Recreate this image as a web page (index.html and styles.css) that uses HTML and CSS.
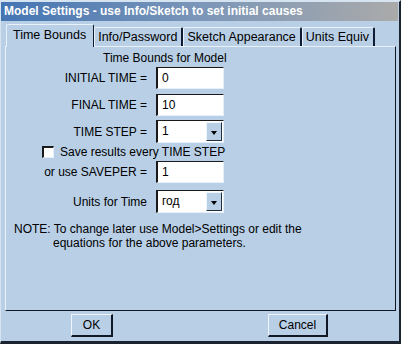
FILE: index.html
```html
<!DOCTYPE html>
<html>
<head>
<meta charset="utf-8">
<link rel="stylesheet" href="styles.css">
</head>
<body>
<div class="window">
  <div class="titlebar">Model Settings - use Info/Sketch to set initial causes</div>
  <div class="tabs">
    <div class="tab selected">Time Bounds</div>
    <div class="tab">Info/Password</div>
    <div class="tab">Sketch Appearance</div>
    <div class="tab">Units Equiv</div>
  </div>
  <div class="panel">
    <div class="heading">Time Bounds for Model</div>
    <div class="row r1"><span class="label">INITIAL TIME =</span><div class="input">0</div></div>
    <div class="row r2"><span class="label">FINAL TIME =</span><div class="input">10</div></div>
    <div class="row r3"><span class="label">TIME STEP =</span><div class="combo"><span class="value">1</span><span class="arrow"></span></div></div>
    <div class="check-row"><span class="checkbox"></span><span>Save results every TIME STEP</span></div>
    <div class="row r5"><span class="label">or use SAVEPER =</span><div class="input">1</div></div>
    <div class="row r6"><span class="label">Units for Time</span><div class="combo"><span class="value">год</span><span class="arrow"></span></div></div>
    <div class="note">
      <div>NOTE: To change later use Model&gt;Settings or edit the</div>
      <div class="indent">equations for the above parameters.</div>
    </div>
  </div>
  <div class="buttons">
    <button class="btn ok">OK</button>
    <button class="btn cancel">Cancel</button>
  </div>
</div>
</body>
</html>
```
FILE: styles.css
```css
html, body {
  margin: 0;
  padding: 0;
  background: #b8cfe6;
}
body {
  font-family: "Liberation Sans", Arial, sans-serif;
  font-size: 12px;
  color: #000;
}
.window {
  width: 401px;
  height: 344px;
  box-sizing: border-box;
  background: #b8cfe6;
  border-top: 2px solid #d6e4f2;
  border-left: 1px solid #d6e4f2;
  border-right: 2px solid #1b2230;
  border-bottom: 3px solid #1b2230;
  display: flex;
  flex-direction: column;
}
.titlebar {
  height: 19px;
  margin-right: 1px;
  line-height: 19px;
  padding-left: 3px;
  font-weight: bold;
  font-size: 12px;
  color: #fff;
  background: linear-gradient(to right, #4475b3 0%, #7b96b8 50%, #aaaaaa 100%);
  white-space: nowrap;
}
.tabs {
  display: flex;
  align-items: flex-end;
  height: 22px;
  margin-top: 3px;
  padding-left: 5px;
  position: relative;
  z-index: 1;
}
.tab {
  height: 19px;
  line-height: 19px;
  font-size: 12.5px;
  padding: 0 4px 0 3px;
  box-sizing: border-box;
  border-top: 1px solid #e8f1fa;
  border-left: 1px solid #e8f1fa;
  border-right: 2px solid #0f1a33;
  border-radius: 2px 2px 0 0;
  white-space: nowrap;
}
.tab.selected {
  height: 23px;
  line-height: 21px;
  padding: 0 7px 0 6px;
  margin-bottom: -1px;
  background: #b8cfe6;
  border-right: 1px solid #0f1a33;
}
.panel {
  flex: 1;
  margin: 0 3px 0 4px;
  border-top: 1px solid #e8f1fa;
  border-left: 1px solid #e8f1fa;
  border-right: 1px solid #101828;
  border-bottom: 1px solid #101828;
  display: flex;
  flex-direction: column;
}
.heading {
  padding-top: 3px;
  padding-left: 97px;
  line-height: 16px;
}
.row {
  display: flex;
  align-items: center;
  gap: 9px;
}
.label {
  width: 141px;
  text-align: right;
  white-space: nowrap;
}
.r1 { margin-top: 1px; }
.r2 { margin-top: 5px; }
.r3 { margin-top: 4px; }
.r5 { margin-top: 0; }
.r6 { margin-top: 7px; }
.input {
  width: 68px;
  height: 22px;
  box-sizing: border-box;
  background: #fff;
  border-top: 1px solid #1a1a1a;
  border-left: 2px solid #1a1a1a;
  border-right: 1px solid #e6f0fa;
  border-bottom: 1px solid #e6f0fa;
  padding-left: 4px;
  line-height: 20px;
}
.combo {
  width: 68px;
  height: 23px;
  box-sizing: border-box;
  background: #fff;
  border-top: 1px solid #1a1a1a;
  border-left: 2px solid #1a1a1a;
  border-right: 1px solid #e6f0fa;
  border-bottom: 1px solid #e6f0fa;
  display: flex;
  align-items: stretch;
}
.combo .value {
  flex: 1;
  padding-left: 4px;
  line-height: 21px;
}
.combo .arrow {
  width: 16px;
  margin: 1px 1px 1px 0;
  box-sizing: border-box;
  background: #b8cfe6;
  border-top: 1px solid #eef5fc;
  border-left: 1px solid #eef5fc;
  border-right: 1px solid #203040;
  border-bottom: 1px solid #203040;
  position: relative;
}
.combo .arrow::after {
  content: "";
  position: absolute;
  left: 4px;
  top: 8px;
  border-left: 3.5px solid transparent;
  border-right: 3.5px solid transparent;
  border-top: 4px solid #000;
}
.check-row {
  display: flex;
  align-items: center;
  height: 18px;
  padding-left: 36px;
  gap: 6px;
  white-space: nowrap;
}
.checkbox {
  width: 12px;
  height: 12px;
  box-sizing: border-box;
  background: #fff;
  border-top: 2px solid #1a1a1a;
  border-left: 2px solid #1a1a1a;
  border-right: 1px solid #e6f0fa;
  border-bottom: 1px solid #e6f0fa;
}
.note {
  margin-top: 9px;
  padding-left: 8px;
  line-height: 14px;
}
.note .indent {
  padding-left: 39px;
}
.buttons {
  height: 30px;
  display: flex;
  align-items: flex-start;
  padding-top: 3px;
  box-sizing: border-box;
}
.btn {
  height: 23px;
  box-sizing: border-box;
  font-family: "Liberation Sans", Arial, sans-serif;
  font-size: 12px;
  color: #000;
  background: #b8cfe6;
  border-top: 1px solid #eef5fc;
  border-left: 1px solid #eef5fc;
  border-right: 2px solid #101828;
  border-bottom: 2px solid #101828;
  padding: 0;
  border-radius: 0;
}
.ok {
  width: 42px;
  margin-left: 70px;
}
.cancel {
  width: 60px;
  margin-left: 155px;
}
```
